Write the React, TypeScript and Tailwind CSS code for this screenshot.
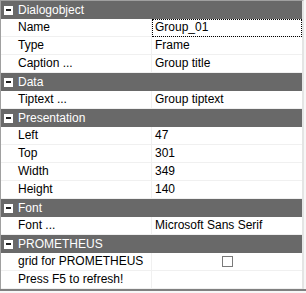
import React from "react";

type Row =
  | { kind: "header"; title: string }
  | { kind: "prop"; label: string; value?: string; focus?: boolean; checkbox?: boolean };

const rows: Row[] = [
  { kind: "header", title: "Dialogobject" },
  { kind: "prop", label: "Name", value: "Group_01", focus: true },
  { kind: "prop", label: "Type", value: "Frame" },
  { kind: "prop", label: "Caption ...", value: "Group title" },
  { kind: "header", title: "Data" },
  { kind: "prop", label: "Tiptext ...", value: "Group tiptext" },
  { kind: "header", title: "Presentation" },
  { kind: "prop", label: "Left", value: "47" },
  { kind: "prop", label: "Top", value: "301" },
  { kind: "prop", label: "Width", value: "349" },
  { kind: "prop", label: "Height", value: "140" },
  { kind: "header", title: "Font" },
  { kind: "prop", label: "Font ...", value: "Microsoft Sans Serif" },
  { kind: "header", title: "PROMETHEUS" },
  { kind: "prop", label: "grid for PROMETHEUS", checkbox: true },
  { kind: "prop", label: "Press F5 to refresh!" },
];

function Header({ title }: { title: string }) {
  return (
    <div className="flex h-[18px] items-center bg-[#696969] text-white">
      <div className="ml-[3px] flex h-[9px] w-[9px] items-center justify-center bg-white">
        <div className="h-[2px] w-[5px] bg-[#202020]" />
      </div>
      <span className="ml-[5px] leading-[18px]">{title}</span>
    </div>
  );
}

function Prop({ label, value, focus, checkbox }: { label: string; value?: string; focus?: boolean; checkbox?: boolean }) {
  return (
    <div className="flex h-[18px] border-b border-[#f0f0f0] text-black">
      <div className="w-[151px] shrink-0 border-r border-[#f0f0f0] pl-[17px] leading-[17px] whitespace-nowrap">
        {label}
      </div>
      <div
        className={
          focus
            ? "flex-1 border border-dotted border-black pl-[2px] leading-[15px] whitespace-nowrap -mb-[1px]"
            : "flex-1 pl-[3px] leading-[17px] whitespace-nowrap"
        }
      >
        {checkbox ? (
          <div className="flex h-[17px] items-center justify-center pr-[2px]">
            <div className="h-[11px] w-[11px] border border-[#7a7a7a] bg-white" />
          </div>
        ) : (
          value
        )}
      </div>
    </div>
  );
}

export default function App() {
  return (
    <div className="h-[293px] w-[306px] overflow-hidden bg-[#f7f7f7] font-['Liberation_Sans',Arial,sans-serif] text-[12px]">
      <div className="w-[304px] border-l border-t border-[#a0a0a0] border-r-2 border-r-[#e4e4e4] bg-white">
        {rows.map((r, i) =>
          r.kind === "header" ? (
            <Header key={i} title={r.title} />
          ) : (
            <Prop key={i} label={r.label} value={r.value} focus={r.focus} checkbox={r.checkbox} />
          )
        )}
      </div>
      <div className="h-[2px] w-[306px] bg-[#808080]" />
    </div>
  );
}
